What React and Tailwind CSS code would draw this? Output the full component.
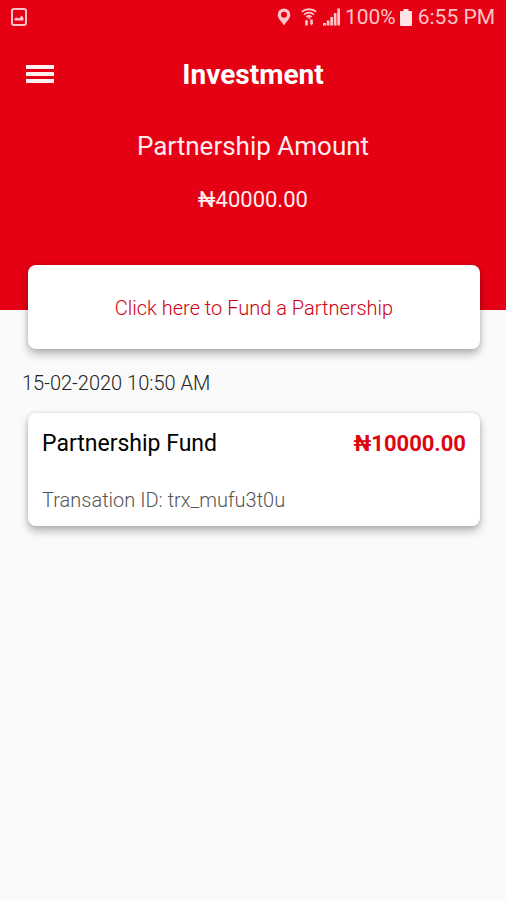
function PictureIcon() {
  return (
    <svg viewBox="0 0 16 18" className="h-[18px] w-4" aria-hidden="true">
      <rect x="1" y="1" width="14" height="16" rx="2" fill="none" stroke="currentColor" strokeWidth="2" />
      <path d="M3.500 12.500V10.500L5.500 9.500L8 10.500L11 7.500L12.500 10V12.500Z" fill="currentColor" />
    </svg>
  );
}

function PinIcon() {
  return (
    <svg viewBox="0 0 14 18" className="h-[18px] w-3.5" aria-hidden="true">
      <path
        fillRule="evenodd"
        d="M7 0.500A6.300 6.300 0 0 0 0.700 6.800C0.700 10.500 4.500 13.500 7 17.500C9.500 13.500 13.300 10.500 13.300 6.800A6.300 6.300 0 0 0 7 0.500ZM7 3.700A3 3 0 1 1 7 9.700A3 3 0 0 1 7 3.700Z"
        fill="currentColor"
      />
    </svg>
  );
}

function WifiIcon() {
  return (
    <svg viewBox="0 0 16 18" className="h-[18px] w-4" aria-hidden="true">
      <g fill="none" stroke="currentColor" strokeWidth="1.800">
        <path d="M0.800 3.800C4.800 0.400 11.200 0.400 15.200 3.800" />
        <path d="M3 6.600C6 4.200 10 4.200 13 6.600" />
        <path d="M5.300 9C7 7.700 9 7.700 10.700 9" />
      </g>
      <path d="M6.500 9.500H9.500L8 11.500Z" fill="currentColor" />
      <path d="M5.500 11.500L7.500 14H6.800V17.500H4.200V14H3.500Z" fill="currentColor" />
      <path d="M9.200 11.500H11.800V15H12.500L10.500 17.500L8.500 15H9.200Z" fill="currentColor" />
    </svg>
  );
}

function SignalIcon() {
  return (
    <svg viewBox="0 0 18 18" className="h-[18px] w-[18px]" aria-hidden="true">
      <path d="M0 15H3V17.500H0ZM3.700 12.500H6.500V17.500H3.700ZM7.300 9H10V17.500H7.300ZM10.800 5H13.500V17.500H10.800ZM14.300 0.500H17V17.500H14.300Z" fill="currentColor" />
    </svg>
  );
}

function BatteryIcon() {
  return (
    <svg viewBox="0 0 12 17" className="h-[17px] w-3" aria-hidden="true">
      <path d="M3.500 0H8.500V2H11Q12 2 12 3V16Q12 17 11 17H1Q0 17 0 16V3Q0 2 1 2H3.500Z" fill="currentColor" />
    </svg>
  );
}

function StatusBar() {
  return (
    <div className="flex h-[34px] items-center justify-between px-[11px] text-[#ffc4c8]">
      <PictureIcon />
      <div className="flex items-center text-[21px] leading-6">
        <PinIcon />
        <span className="ml-2.5 flex items-center gap-1.5">
          <WifiIcon />
          <SignalIcon />
        </span>
        <span className="ml-1">100%</span>
        <span className="ml-1 text-[#ffe4e6]">
          <BatteryIcon />
        </span>
        <span className="ml-1.5">6:55 PM</span>
      </div>
    </div>
  );
}

function Transaction({ date, title, amount, id }) {
  return (
    <article>
      <time className="block px-[22px] text-xl leading-6 font-light text-[#222222]">{date}</time>
      <div className="mr-[26px] ml-7 mt-[18px] rounded-lg bg-white px-3.5 pt-[17px] pb-3.5 shadow-[0_5px_8px_rgba(0,0,0,0.28),0_0_4px_rgba(0,0,0,0.12)]">
        <div className="flex items-center justify-between leading-7">
          <h2 className="text-[23px] text-black">{title}</h2>
          <span className="text-[22px] font-bold text-[#dc0510]">{amount}</span>
        </div>
        <p className="mt-[30px] text-xl leading-6 font-light text-[#555555]">Transation ID: {id}</p>
      </div>
    </article>
  );
}

export default function App() {
  return (
    <div className="min-h-screen bg-[#fafafa] font-[Roboto,sans-serif]">
      <header className="bg-[#e60014] pb-24 text-white">
        <StatusBar />
        <div className="grid h-20 grid-cols-[1fr_auto_1fr] items-center px-[26px]">
          <button type="button" aria-label="Open menu" className="flex w-7 flex-col gap-[3px]">
            <span className="h-1 w-full bg-[#fff0f1]" />
            <span className="h-1 w-full bg-[#fff0f1]" />
            <span className="h-1 w-full bg-[#fff0f1]" />
          </button>
          <h1 className="pt-px text-[28px] leading-8 font-bold">Investment</h1>
        </div>
        <div className="pt-4 text-center text-[#ffeced]">
          <p className="text-[26px] leading-8">Partnership Amount</p>
          <p className="mt-6 text-[22px] leading-7">₦40000.00</p>
        </div>
      </header>
      <main>
        <div className="-mt-[45px] mr-[26px] ml-7">
          <button
            type="button"
            className="relative block w-full rounded-lg bg-white pt-[31px] pb-[29px] text-xl leading-6 font-light text-[#d00010] shadow-[0_5px_8px_rgba(0,0,0,0.28),0_0_4px_rgba(0,0,0,0.12)]"
          >
            Click here to Fund a Partnership
          </button>
        </div>
        <section className="mt-[22px]">
          <Transaction date="15-02-2020 10:50 AM" title="Partnership Fund" amount="₦10000.00" id="trx_mufu3t0u" />
        </section>
      </main>
    </div>
  );
}
